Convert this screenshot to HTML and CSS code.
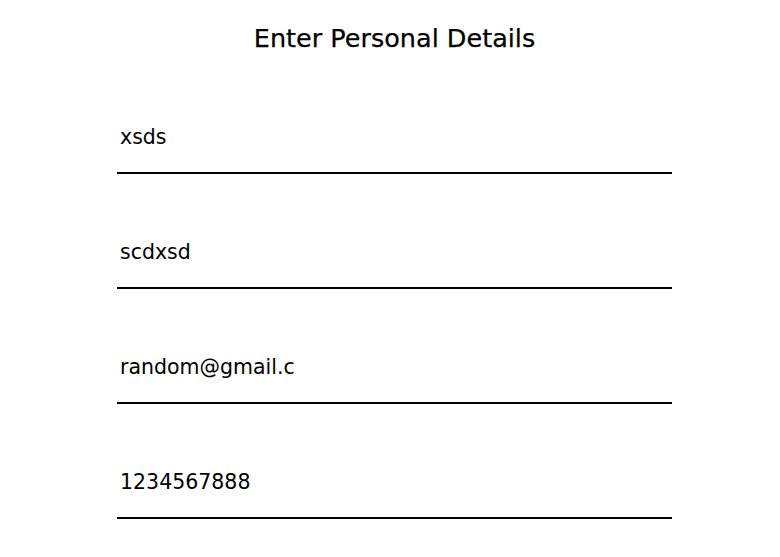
FILE: index.html
```html
<!DOCTYPE html>
<html lang="en">
<head>
<meta charset="utf-8">
<title>Enter Personal Details</title>
<link rel="stylesheet" href="styles.css">
</head>
<body>
<main class="page">
  <h1 class="title">Enter Personal Details</h1>
  <form class="form">
    <input class="field" type="text" value="xsds" aria-label="First name">
    <input class="field" type="text" value="scdxsd" aria-label="Last name">
    <input class="field" type="email" value="random@gmail.c" aria-label="Email">
    <input class="field" type="tel" value="1234567888" aria-label="Phone">
  </form>
</main>
</body>
</html>
```
FILE: styles.css
```css
html, body {
  margin: 0;
  padding: 0;
  background: #ffffff;
}
body {
  font-family: "DejaVu Sans", sans-serif;
  color: #000;
}
.page {
  width: 555px;
  margin-left: 117px;
  padding-top: 24px;
  display: flex;
  flex-direction: column;
}
.title {
  margin: 0;
  font-size: 25.5px;
  line-height: 28px;
  font-weight: normal;
  text-align: center;
  -webkit-text-stroke: 0.25px #000;
}
.form {
  margin-top: 73px;
  display: flex;
  flex-direction: column;
  gap: 66px;
}
.field {
  display: block;
  box-sizing: content-box;
  width: 549px;
  height: 24px;
  line-height: 24px;
  margin: 0;
  padding: 0 3px 23px;
  border: none;
  border-bottom: 2px solid #000;
  outline: none;
  background: transparent;
  font-family: "DejaVu Sans", sans-serif;
  font-size: 20.5px;
  color: #000;
}
```
